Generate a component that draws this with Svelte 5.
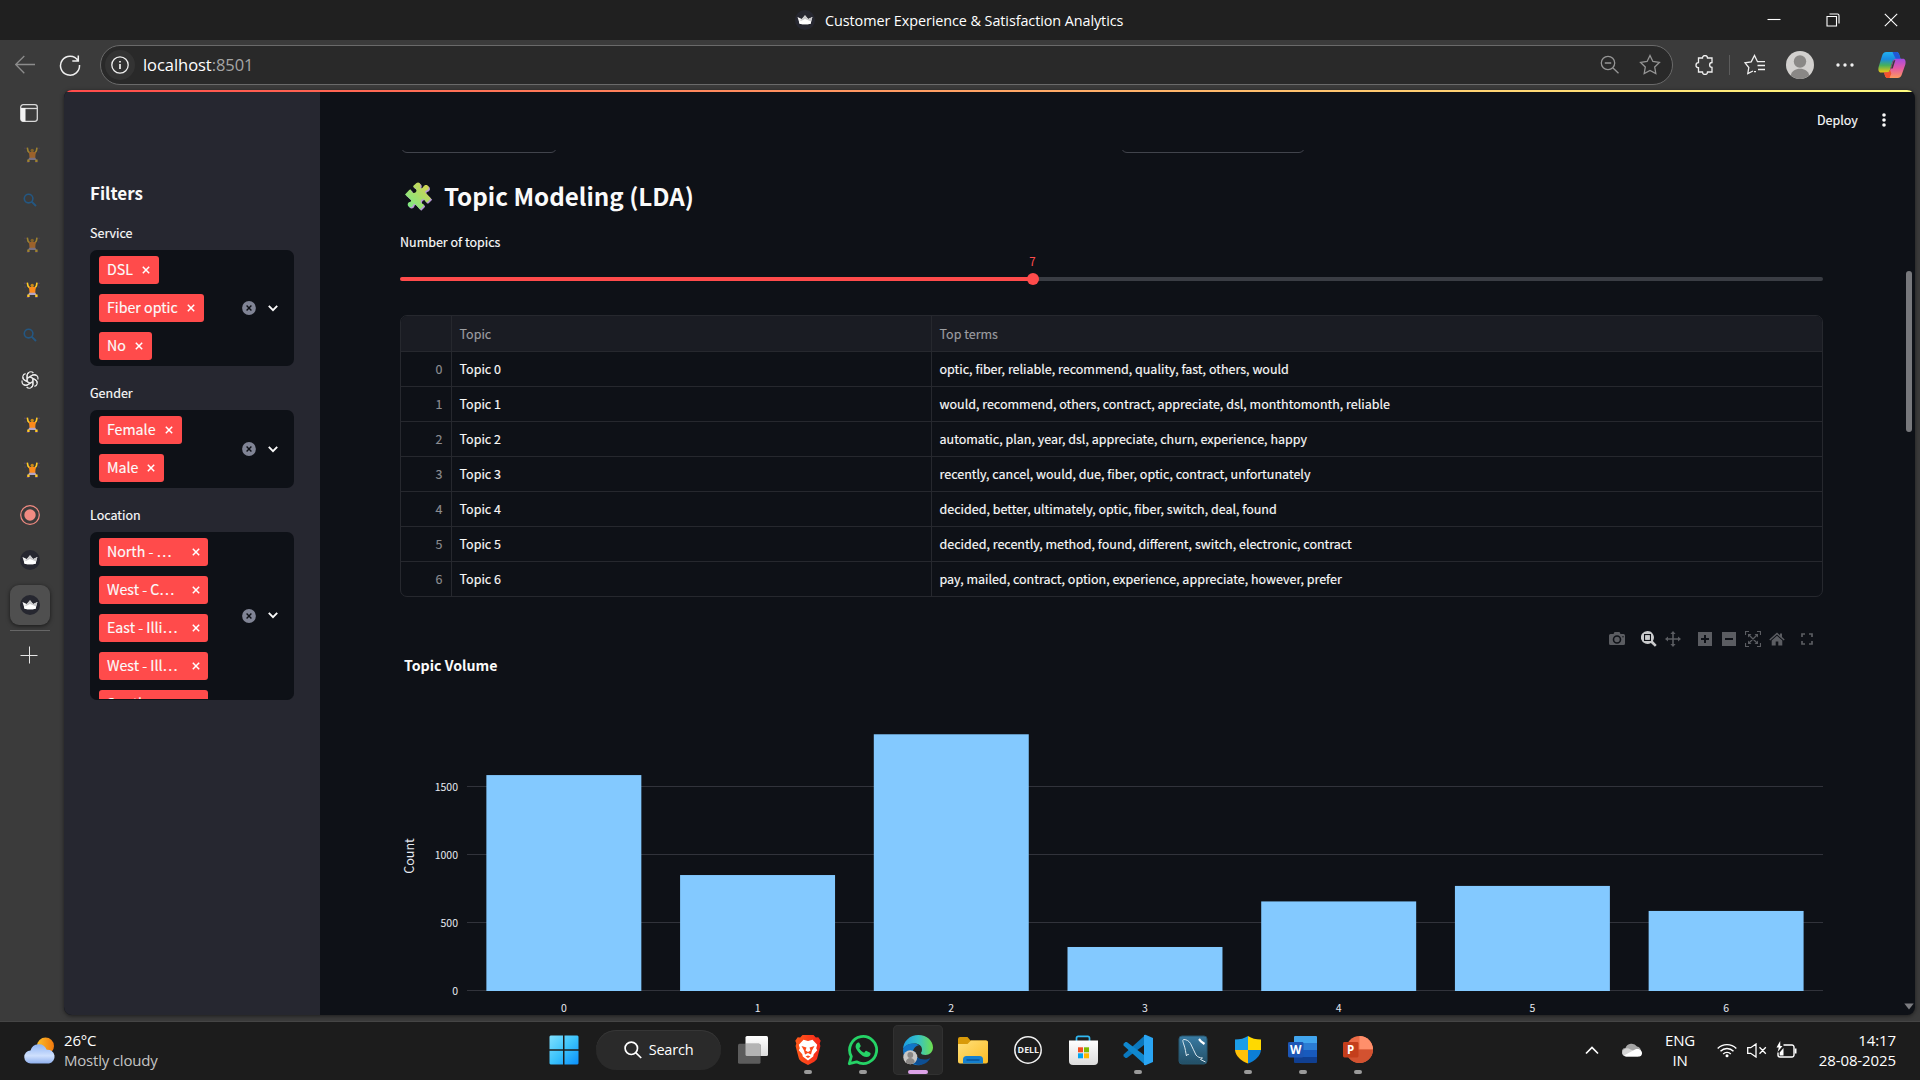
<script>
  const rail = ['lift dim', 'search', 'lift dim', 'lift', 'search', 'gpt', 'lift', 'lift', 'record', 'crown', 'crown active'];

  const filters = [
    { label: 'Service', cls: 'service', tags: ['DSL', 'Fiber optic', 'No'] },
    { label: 'Gender', cls: 'gender', tags: ['Female', 'Male'] },
    { label: 'Location', cls: 'location', tags: ['North - …', 'West - C…', 'East - Illi…', 'West - Ill…', 'South - …'] }
  ];

  const topics = [
    'optic, fiber, reliable, recommend, quality, fast, others, would',
    'would, recommend, others, contract, appreciate, dsl, monthtomonth, reliable',
    'automatic, plan, year, dsl, appreciate, churn, experience, happy',
    'recently, cancel, would, due, fiber, optic, contract, unfortunately',
    'decided, better, ultimately, optic, fiber, switch, deal, found',
    'decided, recently, method, found, different, switch, electronic, contract',
    'pay, mailed, contract, option, experience, appreciate, however, prefer'
  ];

  // Chart geometry in svg units
  const base = 990.5;
  const perUnit = 136 / 1000;
  const pitch = 193.71;
  const counts = [1584, 849, 1884, 320, 655, 769, 585];
  const ticks = [0, 500, 1000, 1500];
  const yOf = (v) => base - v * perUnit;

  const apps = ['taskview', 'brave', 'whatsapp', 'edge', 'explorer', 'dell', 'store', 'vscode', 'mysql', 'shield', 'word', 'ppt'];
  const running = ['brave', 'whatsapp', 'edge', 'vscode', 'shield', 'word', 'ppt'];
</script>

{#snippet crown()}
  <svg width="20" height="20" viewBox="0 0 20 20">
    <circle cx="10" cy="10" r="10" fill="#262730" />
    <path d="M2.5 7 L6.8 9 L10 5.3 L13.2 9 L17.4 7 L15.6 13.8 Q10 14.8 4.6 13.8Z" fill="#f4f4f4" />
    <path d="M10 5.3 L13.2 9 L17.4 7 L15.6 13 L5 10.5 L6.8 9Z" fill="#c9c9cb" />
    <path d="M4 12 L10 9 L16.2 11.5 L15.6 13.8 Q10 14.8 4.6 13.8Z" fill="#fff" />
  </svg>
{/snippet}

{#snippet railIcon(kind)}
  {#if kind.startsWith('lift')}
    <svg class="lift" class:dim={kind.includes('dim')} width="16" height="16" viewBox="0 0 16 16">
      <path d="M.2 1.2h1.4M14.4 1.2h1.4M.6 5h1M14.4 5h1M2.6 15.6h2.6M11.2 15.6h2.4" stroke="#5d4380" stroke-width="1" />
      <path d="M3.3.6 L4 4 L6 6.2 M13 .6 L12.4 4 L10.600 6.2" stroke="#ffc928" stroke-width="1.6" fill="none" />
      <circle cx="8.2" cy="3.500" r="1.7" fill="#c98a18" />
      <path d="M4.9 5h6.800l-.5 6.2H5.600z" fill="#fb8a1c" />
      <path d="M5.2 10.8h6.200l1.200 2.200H4z" fill="#b4a5c8" />
      <path d="M3.2 13.8h2.400M11.200 13.800h2.400" stroke="#ffc928" stroke-width="2.400" />
    </svg>
  {:else if kind === 'search'}
    <svg width="14" height="14" viewBox="0 0 14 14" fill="none" stroke="#245782" stroke-width="1.6">
      <circle cx="5.6" cy="5.6" r="4.300" /><path d="M8.6 8.6 L13 13" stroke-width="1.9" />
    </svg>
  {:else if kind === 'gpt'}
    <svg width="18" height="18" viewBox="-9 -9 18 18" fill="none" stroke="#e9e9e9" stroke-width="1.200">
      {#each [0, 60, 120, 180, 240, 300] as a}
        <path transform="rotate({a})" d="M-2.9 1.600 L-2.9 -4.800 A3.600 3.600 0 0 1 3.400 -7 M-2.9 -1.600 L2.700 -4.900 A3.500 3.500 0 0 1 6 -4.600" />
      {/each}
    </svg>
  {:else if kind === 'record'}
    <svg width="20" height="20" viewBox="0 0 20 20">
      <circle cx="10" cy="10" r="9.3" fill="none" stroke="#f28b82" stroke-width="1.2" />
      <circle cx="10" cy="10" r="5.7" fill="#f28b82" />
    </svg>
  {:else}
    {@render crown()}
  {/if}
{/snippet}

{#snippet appIcon(name)}
  <svg width="32" height="32" viewBox="0 0 32 32">
    {#if name === 'taskview'}
      <rect x="8.5" y="2" width="22.5" height="20" rx="1.5" fill="url(#tvw)" />
      <rect x="1" y="9.8" width="22.5" height="20" rx="1.5" fill="#5c5c5c" />
      <path d="M8.5 9.8H22a1.5 1.5 0 0 1 1.5 1.5V22H10a1.5 1.5 0 0 1-1.5-1.5z" fill="#b4b4b4" />
    {:else if name === 'brave'}
      <path d="M10.5 1h11l2.3 2.6 2.5-.4 2.4 3.6-1 2.6.7 2.6-3.2 12.2c-.5 1.6-2 2.8-3.4 3.8L16 31l-5.800-3c-1.500-1-2.900-2.200-3.400-3.800L3.600 12l.7-2.600-1-2.600 2.400-3.600 2.500.4z" fill="url(#brv)" />
      <path d="M16 7l4.500-1.300 4.700 5-1 3.500 1 2-3.500 4-.5 2.400L16 26.500l-5.200-3.900-.5-2.400-3.500-4 1-2-1-3.500 4.700-5z" fill="#fff" />
      <path d="M9.500 12l5 1.500-1 3 2.500 1.500 2.500-1.500-1-3 5-1.500-2.500 4.500-1 4L16 19l-3 1.500-1-4zM13.500 22.500L16 24l2.500-1.500-2.500-1z" fill="#fb4a1c" />
    {:else if name === 'whatsapp'}
      <path d="M2.300 29.700l2-7.200A13.500 13.500 0 1 1 9.600 27.800z" fill="none" stroke="#25d366" stroke-width="2.800" stroke-linejoin="round" />
      <path d="M11.300 8.600c-.8 0-2.700 1.300-2.700 3.800 0 3.300 6.300 10.600 11 10.600 2.400 0 4-1.600 4-3.300 0-.8-.3-1-1-1.300l-3-1.500c-.6-.3-.9-.1-1.300.4l-1.100 1.400c-2-.7-4-2.600-4.900-4.500l1.100-1.400c.3-.4.4-.7.2-1.200l-1.200-2.600c-.2-.4-.5-.4-1.100-.4z" fill="#25d366" />
    {:else if name === 'edge'}
      <path d="M1 16C1 7 8 1 16.500 1 25 1 31 7 31 13.500c0 4.500-3.500 7.500-7.500 7.500-3 0-4.500-1-4.500-2 0-.8 1-1 1-3.500C20 12 17 9.500 12.500 9.500 6 9.500 1 13 1 16z" fill="url(#edg)" />
      <path d="M1 16c.5-4 5-6.500 10.500-6.500 2 0 4 .6 5.500 1.700-3 .3-6.500 3.800-6.500 8.300 0 6 5 10.500 10 11.300C10 33 1 26 1 16z" fill="#1176c8" />
      <path d="M13 17c0 5 4 8.500 9.500 8.500 2.500 0 4.500-.6 6-1.500-2.500 4.500-7 7-11.500 7-6 0-8-6-7-10 .5-2 1.500-3.500 3-4z" fill="#0d4f94" />
      <circle cx="8.300" cy="23.300" r="7" fill="#c9c7c5" />
      <circle cx="8.300" cy="21" r="2.900" fill="#8b8886" /><path d="M3.800 28.500c0-6 9-6 9 0-2.500 2.300-6.500 2.300-9 0z" fill="#8b8886" />
    {:else if name === 'explorer'}
      <path d="M1 5a2 2 0 0 1 2-2h7.500l3 3.500H29a2 2 0 0 1 2 2V12H1z" fill="#d99a09" />
      <path d="M1 10h9.500L14 6.500h15a2 2 0 0 1 2 2V27.500a2 2 0 0 1-2 2H3a2 2 0 0 1-2-2z" fill="url(#fld)" />
      <path d="M6 29.500V25.500a3.500 3.500 0 0 1 3.500-3.500h13a3.500 3.500 0 0 1 3.500 3.500v4z" fill="#1580cf" /><path d="M9.500 26h13" stroke="#064f94" stroke-width="1.400" />
    {:else if name === 'dell'}
      <circle cx="16" cy="16" r="13.200" fill="none" stroke="#f0f0f0" stroke-width="1.500" />
      <text x="5.600" y="19.400" font-size="9.500" font-weight="700" fill="#f0f0f0" textLength="21.500" lengthAdjust="spacingAndGlyphs">DELL</text>
    {:else if name === 'store'}
      <path d="M9.500 7V4a1.700 1.700 0 0 1 1.700-1.700h9.600A1.700 1.700 0 0 1 22.500 4v3" fill="none" stroke="#31b9f2" stroke-width="1.700" />
      <path d="M2 6.500h29V27a4 4 0 0 1-4 4H6a4 4 0 0 1-4-4z" fill="url(#tvw)" />
      <path d="M11 13.300h5v5h-5z" fill="#f25022" /><path d="M17 13.300h5v5h-5z" fill="#7fba00" /><path d="M11 19.300h5v5h-5z" fill="#00a4ef" /><path d="M17 19.300h5v5h-5z" fill="#ffb900" />
    {:else if name === 'vscode'}
      <path d="M23 1.200L1.500 20.500v1.800l2 1.700h1.300L24 9.500z" fill="#0b78bd" />
      <path d="M23 30.800L1.500 11.500V9.700L3.500 8h1.300L24 22.500z" fill="#1088cf" />
      <path d="M22 1l1.500-.3L31 4v24l-7.500 3.300L22 31z" fill="#2aa5f3" />
    {:else if name === 'mysql'}
      <rect x="2" y="2" width="28" height="28" rx="3" fill="url(#sql)" stroke="#27566f" />
      <path d="M12 21c-1-1.500-2-.5-2.500 1C8.500 18 8.500 15 7 11 6 8 5 5.500 7 5.500c2.500 0 5 1.500 6.500 4 2 3.500 3.500 8 5.500 11.500 1.500 2 4 3 6.500 3l-2 1.500 5 2.500" fill="none" stroke="#dbe8ef" stroke-width="1" />
      <path d="M22 5l2 2.500 3.500 2.500" stroke="#fff" stroke-width="2.200" />
    {:else if name === 'shield'}
      <path d="M16 2C12.500 4.500 8 5.500 3 5.500V16h13z" fill="#1b9de8" /><path d="M16 2c3.500 2.500 8 3.500 13 3.500V16H16z" fill="#ffd900" />
      <path d="M3 16h13v13.500C9 27 3.500 22 3 16z" fill="#ffc108" /><path d="M29 16H16v13.500C23 27 28.500 22 29 16z" fill="#0c7fd6" />
    {:else if name === 'word'}
      <path d="M8 2h21a1 1 0 0 1 1 1v6H7V3a1 1 0 0 1 1-1z" fill="#41a5ee" /><path d="M7 9h23v7H7z" fill="#2b7cd3" /><path d="M7 16h23v7H7z" fill="#185abd" /><path d="M7 23h23v5a1 1 0 0 1-1 1H8a1 1 0 0 1-1-1z" fill="#103f91" />
      <rect x="1" y="8" width="15.500" height="15.500" rx="1.400" fill="#1d56b5" />
      <text x="3" y="19.800" font-size="11.500" font-weight="700" fill="#fff" textLength="11.500" lengthAdjust="spacingAndGlyphs">W</text>
    {:else}
      <circle cx="17.500" cy="15.500" r="13.500" fill="#ed6c47" /><path d="M17.500 2A13.500 13.500 0 0 1 31 15.500H17.500z" fill="#ff8f6b" /><path d="M4 15.500h27a13.500 13.500 0 0 1-27 0z" fill="#d35230" />
      <rect x="1" y="8" width="15.500" height="15.500" rx="1.400" fill="#c43e1c" />
      <text x="5" y="19.800" font-size="11.500" font-weight="700" fill="#fff">P</text>
    {/if}
  </svg>
{/snippet}

<svg class="defs" width="0" height="0">
  <defs>
    <linearGradient id="tvw" x1="0" y1="0" x2="0" y2="1"><stop offset="0" stop-color="#fff" /><stop offset="1" stop-color="#dcdcdc" /></linearGradient>
    <linearGradient id="brv" x1="0" x2="1"><stop offset="0" stop-color="#ff5a1a" /><stop offset="1" stop-color="#f5261a" /></linearGradient>
    <linearGradient id="edg" x1="0" x2="1"><stop offset="0" stop-color="#1b9de2" /><stop offset=".5" stop-color="#35c1c8" /><stop offset="1" stop-color="#6fe04d" /></linearGradient>
    <linearGradient id="fld" x1="0" y1="0" x2="1" y2="1"><stop offset="0" stop-color="#ffe07a" /><stop offset="1" stop-color="#fbbc25" /></linearGradient>
    <linearGradient id="sql" x1="0" y1="0" x2="0" y2="1"><stop offset="0" stop-color="#397ba3" /><stop offset="1" stop-color="#234f66" /></linearGradient>
    <linearGradient id="win" x1="0" y1="0" x2="1" y2="1"><stop offset="0" stop-color="#80e0ff" /><stop offset=".5" stop-color="#3cc3fb" /><stop offset="1" stop-color="#0a8ffb" /></linearGradient>
    <linearGradient id="puz" x1="0" y1="1" x2="1" y2="0"><stop offset="0" stop-color="#6fec8c" /><stop offset="1" stop-color="#dfd04a" /></linearGradient>
    <linearGradient id="cp1" x1="0" y1="0" x2="0" y2="1"><stop offset="0" stop-color="#20b0f0" /><stop offset=".35" stop-color="#1a8be0" /><stop offset=".65" stop-color="#46b05c" /><stop offset="1" stop-color="#f2c811" /></linearGradient>
    <linearGradient id="cp2" x1="0" y1="0" x2="0" y2="1"><stop offset="0" stop-color="#a34be0" /><stop offset=".5" stop-color="#e45aa5" /><stop offset="1" stop-color="#ff9a5c" /></linearGradient>
    <linearGradient id="sun" x1="0" x2="1"><stop offset="0" stop-color="#fbc02d" /><stop offset="1" stop-color="#f2780c" /></linearGradient>
    <linearGradient id="cld" x1="0" y1="0" x2="0" y2="1"><stop offset="0" stop-color="#8fb4f4" /><stop offset=".6" stop-color="#cfe0fd" /><stop offset="1" stop-color="#8fb0ee" /></linearGradient>
  </defs>
</svg>

<div class="screen">
  <header class="titlebar">
    <div class="caption">{@render crown()}<span>Customer Experience &amp; Satisfaction Analytics</span></div>
    <div class="winbtns">
      <svg width="14" height="14" viewBox="0 0 14 14"><path d="M.5 6.500h13" /></svg>
      <svg width="14" height="14" viewBox="0 0 14 14"><path d="M1 3.500h9.500V13H1zM3.500 1h8a1.500 1.500 0 0 1 1.500 1.500v8" /></svg>
      <svg width="14" height="14" viewBox="0 0 14 14"><path d="M.8.800l12.400 12.400M13.200.800L.8 13.200" /></svg>
    </div>
  </header>

  <div class="toolbar">
    <svg class="back" width="20" height="20" viewBox="0 0 20 20"><path d="M20 9.500H.7M9.300 1L.7 9.500l8.600 8.700" /></svg>
    <svg class="reload" width="22" height="22" viewBox="0 0 22 22"><path d="M19 6.500A9.500 9.500 0 1 0 20.500 11M19.300 1.500v5.600h-6" /></svg>
    <div class="address">
      <span class="info"><svg width="18" height="18" viewBox="0 0 18 18"><circle cx="9" cy="9" r="8.200" /><path d="M9 8v5M9 5v1.600" stroke-width="1.700" /></svg></span>
      <span class="url">localhost<i>:8501</i></span>
      <svg class="gray" width="20" height="20" viewBox="0 0 20 20"><circle cx="8" cy="8" r="6.700" /><path d="M13 13l5.500 5.300M4.800 8h6.400" /></svg>
      <svg class="gray star" width="22" height="22" viewBox="0 0 22 22"><path d="M11 1.500l2.900 6 6.500.9-4.700 4.600 1.100 6.500L11 16.400l-5.800 3.100 1.100-6.500L1.600 8.400l6.500-.9z" /></svg>
    </div>
    <svg class="ext" width="20" height="20" viewBox="0 0 20 20"><path d="M4 3h3.500a2.500 2.500 0 0 1 5 0H17v4.500a2.300 2.300 0 1 0 0 4.800V17h-4.500a2.500 2.500 0 0 1-5 0H3.500v-4.300a2.500 2.500 0 0 1 0-5V3z" /></svg>
    <span class="sep"></span>
    <svg class="fav" width="22" height="22" viewBox="0 0 22 22"><path d="M9 17l-5.200 2.500 1-6L1 8.800l6.200-1L10.500 1.500l3 6.200H21M13.500 11.500H21M14 15.500h7M10 17.600h2" /></svg>
    <svg class="avatar" width="28" height="28" viewBox="0 0 28 28"><circle cx="14" cy="14" r="14" fill="#d2d0ce" stroke="none" /><circle cx="14" cy="10.500" r="6.200" fill="#8a8886" stroke="none" /><path d="M4.800 24.500c1-9 17.400-9 18.400 0A14 14 0 0 1 4.800 24.500z" fill="#8a8886" stroke="none" /></svg>
    <svg class="more" width="18" height="6" viewBox="0 0 18 6"><path d="M2 3h.01M9 3h.01M16 3h.01" stroke-width="3.400" stroke-linecap="round" /></svg>
    <svg class="copilot" width="28" height="28" viewBox="0 0 28 28">
      <path class="blue" d="M8.500 1h10c2 0 2.600 2 3.300 4.600l.8 2.600H18c-2 0-3 .8-3.600 2.800l-2.500 8c-.6 1.800-1.500 2.500-3.400 2.500H3C.6 21.500 0 19 .6 16L4 5c.8-2.500 2-4 4.500-4z" />
      <path class="navy" d="M14.500 1h4c2 0 2.800 2 3.500 5l.6 2.200H18L15.600 3.500z" />
      <path class="pink" d="M19.500 27h-10c-2 0-2.500-2-3-4.200l-.4-1.300h2.500c2 0 2.900-.7 3.500-2.500l2.700-8.500c.6-1.800 1.500-2.800 3.400-2.800H25c2.400 0 3 2.500 2.400 5.500L24 23c-.8 2.500-2 4-4.500 4z" />
      <path class="ember" d="M6.100 21.500h2.500c2 0 2.900-.7 3.500-2.500l1.200 3.500L11.500 27h-2c-2 0-2.800-2.700-3.400-5.500z" />
      <path class="gap" d="M13 17.500l2.600-8 1.800-.5-2.700 8.500z" />
    </svg>
  </div>

  <div class="workspace">
    <nav class="rail">
      <div class="cell first"><svg width="18" height="18" viewBox="0 0 18 18"><rect x=".7" y=".7" width="16.600" height="16.600" rx="2.500" fill="none" stroke="#d8d8d8" stroke-width="1.300" /><path d="M.7 4.500h16.600" stroke="#d8d8d8" stroke-width="1.300" /><path d="M1 4h4.500v13.500H3a2 2 0 0 1-2-2z" fill="#f2f2f2" /></svg></div>
      {#each rail as kind}
        <div class="cell" class:active={kind.includes('active')}><span>{@render railIcon(kind)}</span></div>
      {/each}
      <hr />
      <svg class="plus" width="18" height="18" viewBox="0 0 18 18"><path d="M9.500 .5v17M.5 9.500h17" stroke="#e6e6e6" stroke-width="1" /></svg>
    </nav>

    <div class="page">
      <div class="rainbow"></div>
      <aside>
        <h3>Filters</h3>
        {#each filters as f}
          <label class={f.cls}>{f.label}</label>
          <div class="select {f.cls}">
            <div class="tags">
              {#each f.tags as t}
                <span class="tag"><b>{t}</b><svg width="8" height="8" viewBox="0 0 8 8"><path d="M.8.800l6.400 6.400M7.200.800L.8 7.200" stroke="#fff" stroke-width="1.500" /></svg></span>
              {/each}
            </div>
            <svg width="14" height="14" viewBox="0 0 14 14"><circle cx="7" cy="7" r="6.900" fill="#808495" /><path d="M4.600 4.600l4.800 4.800M9.400 4.600L4.600 9.400" stroke="#0e1117" stroke-width="1.400" /></svg>
            <svg class="chev" width="10" height="7" viewBox="0 0 10 7"><path d="M.8.900L5 5.200 9.200.900" fill="none" stroke="#fafafa" stroke-width="1.900" /></svg>
          </div>
        {/each}
      </aside>

      <main>
        <div class="apphead"><span>Deploy</span><svg width="4" height="14" viewBox="0 0 4 14"><circle cx="2" cy="2" r="1.800" /><circle cx="2" cy="7" r="1.800" /><circle cx="2" cy="12" r="1.800" /></svg></div>
        <div class="clipped"><i class="c1"></i><i class="c2"></i></div>
        <h2>
          <svg width="30" height="30" viewBox="0 0 30 30">
            <path transform="translate(1.200 1.200)" d="M12.500 1c2-1.500 4.500.5 4 2.500-.3 1.200-.6 1.800 0 2.500.8.900 2.300-.2 3-1.500 1-2 4-2 5 0 .8 2-.3 3.500-2 4-1.500.5-1.700 1.500-.8 2.500l5.300 5.500-3.500 3.500c-1 .8-2 .3-2.300-1-.5-2-3-2.500-4-1-1.200 1.600-.3 3.400 1.300 3.800 1.500.5 1.700 1.400.8 2.400L16 27.500l-4.500-5c-1-1-2-.7-2.400.8-.6 2-3 2.700-4.600 1.200-1.500-1.600-.8-4 1.200-4.500 1.500-.5 1.700-1.500.8-2.500L1 12.500l4-4.300c1-1 2-.7 2.400.8.600 2 3 2.500 4.300 1.200 1.400-1.500.6-3.600-1-4.200-1.600-.4-1.900-1.500-1-2.500z" fill="#b99ad6" />
            <path d="M12.500 1c2-1.500 4.500.5 4 2.500-.3 1.200-.6 1.800 0 2.500.8.900 2.300-.2 3-1.500 1-2 4-2 5 0 .8 2-.3 3.500-2 4-1.500.5-1.700 1.500-.8 2.500l5.300 5.500-3.500 3.500c-1 .8-2 .3-2.300-1-.5-2-3-2.500-4-1-1.200 1.600-.3 3.400 1.300 3.800 1.500.5 1.700 1.400.8 2.400L16 27.500l-4.500-5c-1-1-2-.7-2.400.8-.6 2-3 2.700-4.600 1.200-1.500-1.600-.8-4 1.200-4.500 1.500-.5 1.700-1.500.8-2.500L1 12.500l4-4.300c1-1 2-.7 2.400.8.600 2 3 2.500 4.300 1.200 1.400-1.500.6-3.600-1-4.200-1.600-.4-1.900-1.500-1-2.500z" fill="url(#puz)" />
          </svg>
          <span>Topic Modeling (LDA)</span>
        </h2>
        <p class="slabel">Number of topics</p>
        <div class="slider"><div class="track"></div><div class="thumb"><em>7</em></div></div>

        <div class="table">
          <div class="row head"><span></span><span>Topic</span><span>Top terms</span></div>
          {#each topics as terms, i}
            <div class="row"><span>{i}</span><span>Topic {i}</span><span>{terms}</span></div>
          {/each}
        </div>

        <div class="modebar">
          <svg class="m1" width="16" height="16" viewBox="0 0 16 16"><path fill-rule="evenodd" d="M5.500 1h5l1 2H14.500A1.500 1.500 0 0 1 16 4.500v8a1.500 1.500 0 0 1-1.500 1.500h-13A1.500 1.500 0 0 1 0 12.500v-8A1.500 1.500 0 0 1 1.500 3h3zM8 4.200a4.300 4.300 0 1 0 0 8.600 4.300 4.300 0 0 0 0-8.600zm0 1.600a2.700 2.700 0 1 1 0 5.400 2.700 2.700 0 0 1 0-5.400zM14 5a.7.700 0 1 0 0 1.400A.7.700 0 0 0 14 5z" /></svg>
          <svg class="m2" width="16" height="16" viewBox="0 0 16 16"><path fill-rule="evenodd" d="M6.500 0a6.500 6.500 0 1 0 3.400 12l4 3.700 1.800-1.700-3.800-4A6.500 6.500 0 0 0 6.500 0zM3 3h7v7H3zm1.200 1.200v4.600h4.600V4.200z" /><path d="M4.300 4.300h4.400v4.400H4.300z" /></svg>
          <svg class="m3" width="16" height="16" viewBox="0 0 16 16"><path d="M8 0l2.600 3H8.800v4.200H13V5.400L16 8l-3 2.600V8.800H8.800V13h1.800L8 16l-2.600-3h1.800V8.800H3v1.800L0 8l3-2.600v1.800h4.200V3H5.400z" /></svg>
          <svg class="m4" width="14" height="14" viewBox="0 0 14 14"><path fill-rule="evenodd" d="M0 0h14v14H0zM6 3v3H3v2h3v3h2V8h3V6H8V3z" /></svg>
          <svg class="m5" width="14" height="14" viewBox="0 0 14 14"><path fill-rule="evenodd" d="M0 0h14v14H0zM3 6v2h8V6z" /></svg>
          <svg class="m6" width="16" height="16" viewBox="0 0 16 16"><path d="M.5 4V.5H4M12 .5h3.500V4M15.500 12v3.500H12M4 15.500H.5V12M4 4l8 8M12 4l-8 8" fill="none" stroke="#5b5d62" stroke-width="1.200" /><path d="M3 3h3.500L3 6.500zM13 3v3.500L9.500 3zM13 13H9.500L13 9.500zM3 13V9.500L6.500 13z" /></svg>
          <svg class="m7" width="16" height="14" viewBox="0 0 16 14"><path d="M8 .5l3 2.700V1.500h2V5l2.700 2.500-.9 1L8 2.500 1.200 8.500l-.9-1z" /><path d="M8 3.800l5.300 4.700v5h-4V9.500H6.700v4h-4v-5z" /></svg>
          <svg class="m8" width="12" height="12" viewBox="0 0 12 12"><path d="M1 4V1h3M8 1h3v3M11 8v3H8M4 11H1V8" fill="none" stroke="#5b5d62" stroke-width="1.700" /></svg>
        </div>
        <h4>Topic Volume</h4>
        <svg class="chart" width="1423" height="334" viewBox="400 681 1423 334">
          {#each ticks as t}
            <path d="M467 {yOf(t)}H1823" stroke="#31333b" />
            <text class="tick" x="458" y={yOf(t) + 4} text-anchor="end">{t}</text>
          {/each}
          {#each counts as c, i}
            <rect x={467 + pitch * (i + 0.1)} y={yOf(c)} width={pitch * 0.8} height={base + 0.5 - yOf(c)} fill="#83c9ff" />
            <text class="tick" x={467 + pitch * (i + 0.5)} y="1011.500" text-anchor="middle">{i}</text>
          {/each}
          <text class="axis" transform="translate(414 856) rotate(-90)" text-anchor="middle">Count</text>
        </svg>
      </main>

      <div class="scroll"><div class="bar"></div><svg width="10" height="7" viewBox="0 0 10 7"><path d="M.3.500h9.400L5 6.500z" fill="#7c7d81" /></svg></div>
    </div>
  </div>

  <footer>
    <div class="weather">
      <svg width="32" height="30" viewBox="0 0 32 30">
        <circle cx="21.500" cy="10" r="8.500" fill="url(#sun)" />
        <path d="M7 27.500a6.500 6.500 0 0 1-.5-13 8.500 8.500 0 0 1 16.200-.8 7 7 0 0 1 2.300 13.800z" fill="url(#cld)" />
      </svg>
      <div><span>26°C</span><span class="sub">Mostly cloudy</span></div>
    </div>
    <div class="dock">
      <svg class="start" width="30" height="30" viewBox="0 0 30 30"><path d="M1.500.5H14v13.700H.5V1.500zM15.500.5h13l1 1v12.700h-14zM.5 15.700H14v13.800H1.500l-1-1zM15.500 15.700h14v12.800l-1 1h-13z" fill="url(#win)" /></svg>
      <div class="find"><svg width="18" height="18" viewBox="0 0 18 18"><circle cx="7.300" cy="7.300" r="6.200" /><path d="M11.700 11.700l5.500 5.300" /></svg>Search</div>
      {#each apps as a}
        <div class="app" class:focus={a === 'edge'}>{@render appIcon(a)}{#if running.includes(a)}<i></i>{/if}</div>
      {/each}
    </div>
    <div class="tray">
      <svg class="up" width="14" height="9" viewBox="0 0 14 9"><path d="M1 7.500l6-6 6 6" fill="none" stroke="#fff" stroke-width="1.700" /></svg>
      <svg class="cloud" width="20" height="14" viewBox="0 0 20 14"><path d="M4 13a4 4 0 0 1-.5-8A6.500 6.500 0 0 1 15 3.500 5 5 0 0 1 16 13z" fill="#a5a5a5" /><path d="M4 13.500a4 4 0 0 1-1.500-7.500c2-1 4-.8 6 .5l4 1.500 4-2a4 4 0 0 1-.5 7.500z" fill="#d5d5d5" /><path d="M2 12.500L13 6.500c3-1.500 7 .5 7 3.500s-2 3.500-4 3.500H4z" fill="#fff" /></svg>
      <div class="lang"><span>ENG</span><span>IN</span></div>
      <svg class="wifi" width="20" height="15" viewBox="0 0 20 15" fill="none" stroke="#fff" stroke-width="1.400"><path d="M.7 5.500a13 13 0 0 1 18.600 0M3.500 8.300a9 9 0 0 1 13 0M6.200 11a5.300 5.300 0 0 1 7.600 0" /><circle cx="10" cy="12.700" r="1.500" fill="#fff" stroke="none" /></svg>
      <svg class="mute" width="20" height="15" viewBox="0 0 20 15" fill="none" stroke="#fff" stroke-width="1.300"><path d="M.7 4.700h3L9 1v13l-5.300-3.700h-3zM12.500 4.300l6.300 6.400M18.800 4.300l-6.300 6.400" /></svg>
      <svg class="batt" width="21" height="18" viewBox="0 0 21 18"><path d="M7.500 4h8.300A2 2 0 0 1 18 6v8a2 2 0 0 1-2.200 2H4a2 2 0 0 1-2-2V11.500" fill="none" stroke="#fff" stroke-width="1.400" /><path d="M18.700 7.500h1.800v5h-1.800zM3.700 11.500L7.500 7v7.500H3.700z" fill="#fff" /><path d="M4.200 0L.5 6.500h2.300L1.600 11 6.500 5H4.300z" fill="#fff" /></svg>
      <div class="clock"><span>14:17</span><span>28-08-2025</span></div>
    </div>
  </footer>
</div>

<style>
  :global(body) { margin: 0; background: #1c1c1c; }
  .screen { width: 1920px; height: 1080px; overflow: hidden; display: flex; flex-direction: column; color: #fff; font-family: "Open Sans", "Noto Sans", sans-serif; }
  .defs { position: absolute; }
  svg { display: block; flex: none; }
  i, em { font-style: normal; }

  .titlebar { height: 40px; background: #202020; display: grid; grid-template-columns: 795px 1fr 153px; align-items: center; }
  .caption { grid-column: 2; display: flex; align-items: center; gap: 10px; font-size: 14.4px; letter-spacing: -0.08px; line-height: 20px; }
  .caption span { padding-top: 1px; }
  .winbtns { width: 131px; padding-right: 21px; display: flex; justify-content: space-between; }
  .winbtns svg { fill: none; stroke: #fff; stroke-width: 1.1; }

  .toolbar { height: 50px; background: #3b3b3b; display: flex; align-items: center; box-sizing: border-box; }
  .toolbar svg { fill: none; stroke: #f0f0f0; stroke-width: 1.3; }
  .toolbar .back { margin-left: 15px; stroke: #8c8c8c; }
  .toolbar .reload { margin-left: 24px; stroke-width: 1.5; }
  .address { margin-left: 19px; width: 1573px; height: 40px; box-sizing: border-box; border: 1px solid #6a6a6a; border-radius: 20px; background: #292929; display: flex; align-items: center; padding: 0 11px 0 4px; }
  .info { width: 30px; height: 30px; border-radius: 50%; background: #333; display: grid; place-items: center; }
  .url { margin-left: 8px; flex: 1; font-size: 16.5px; letter-spacing: -0.05px; line-height: 24px; }
  .url i { color: #a5a5a5; }
  .toolbar .gray { stroke: #969696; }
  .star { margin-left: 19px; }
  .ext { margin-left: 22px; }
  .sep { width: 1px; height: 20px; background: #5c5c5c; margin-left: 14px; }
  .fav { margin-left: 14px; }
  .avatar { margin-left: 20px; }
  .more { margin-left: 22px; }
  .toolbar .copilot { margin-left: 24px; stroke: none; }
  .blue { fill: url(#cp1); }
  .navy { fill: #2257d6; }
  .pink { fill: url(#cp2); }
  .ember { fill: #f4522d; }
  .gap { fill: #3b3b3b; }

  .workspace { height: 931px; box-sizing: border-box; background: #3b3b3b; display: flex; padding: 0 5px 6px 0; }
  .rail { width: 64px; display: flex; flex-direction: column; align-items: flex-start; }
  .cell { width: 60px; height: 45px; display: grid; place-items: center; }
  .cell.first { height: 42.5px; box-sizing: border-box; padding: 3px 2px 0 0; }
  .cell.active span { width: 40px; height: 40px; border-radius: 9px; background: #4f4f4f; box-shadow: 0 1px 4px #0009; display: grid; place-items: center; }
  .lift { margin-left: 4px; }
  .dim { opacity: 0.5; }
  hr { width: 40px; height: 1px; border: 0; margin: 2px 0 0 10px; background: #666; }
  .plus { margin: 15.5px 0 0 20px; }

  .page { position: relative; flex: 1; border-radius: 8px; overflow: hidden; background: #0e1117; display: flex; font-family: "Noto Sans CJK JP", sans-serif; color: #fafafa; padding-top: 2px; box-shadow: 0 1px 4px #0008; }
  .rainbow { position: absolute; inset: 0 0 auto 0; height: 2px; background: linear-gradient(90deg, #ff4b4b, #fffd80); }
  aside { width: 256px; box-sizing: border-box; background: #262730; padding: 88px 26px 0; }
  h3 { margin: 0; font-size: 17px; line-height: 26px; font-weight: 700; }
  label { display: block; font-size: 12.500px; line-height: 18px; -webkit-text-stroke: 0.15px #fafafa; }
  label.service { margin-top: 18px; }
  label.gender, label.location { margin-top: 18px; }
  .select { margin-top: 8px; width: 204px; height: 116px; box-sizing: border-box; border-radius: 7px; background: #0e1117; display: flex; align-items: center; overflow: hidden; }
  .select.gender { margin-top: 8px; height: 78px; }
  .select.location { margin-top: 8px; height: 168px; border-bottom: 1px solid #0e1117; }
  .tags { width: 152px; height: 100%; box-sizing: border-box; padding: 6px 0 0 9px; display: flex; flex-direction: column; align-items: flex-start; gap: 10px; }
  .tag { height: 28px; flex: none; box-sizing: border-box; padding: 0 9px 0 8px; border-radius: 3px; background: #ff4b4b; display: flex; align-items: center; gap: 9px; }
  .tag b { font-weight: 400; font-size: 14.200px; line-height: 20px; white-space: nowrap; padding-bottom: 2px; -webkit-text-stroke: 0.15px #fff; }
  .location .tag { width: 109px; justify-content: space-between; padding-right: 8.500px; }
  .chev { margin-left: 12px; }

  main { width: 1585px; box-sizing: border-box; padding-left: 80px; display: flex; flex-direction: column; }
  .apphead { height: 58px; display: flex; align-items: center; padding: 0 0 3px 1417px; font-size: 12.500px; gap: 23px; box-sizing: border-box; line-height: 18px; -webkit-text-stroke: 0.15px #fafafa; }
  .apphead span { width: 42px; }
  .apphead svg { fill: #fafafa; margin-top: 1px; }
  .clipped { height: 3px; overflow: hidden; display: flex; align-items: flex-end; }
  .clipped i { height: 12px; box-sizing: border-box; border: 1px solid #41444c; border-radius: 7px; flex: none; }
  .c1 { margin-left: 1px; width: 156px; }
  .c2 { margin-left: 564px; width: 184px; }
  h2 { margin: 0; height: 72px; box-sizing: border-box; padding: 25px 0 0 4px; display: flex; gap: 10px; font-size: 24.200px; line-height: 36px; font-weight: 700; }
  h2 svg { margin-top: 4px; }
  .slabel { margin: 0; height: 34px; line-height: 34px; font-size: 12.500px; -webkit-text-stroke: 0.15px #fafafa; }
  .slider { position: relative; width: 1423px; height: 56px; box-sizing: border-box; padding-top: 18px; }
  .track { height: 4px; border-radius: 2px; background: linear-gradient(90deg, #ff4b4b 44.44%, #3a3d44 44.44%); }
  .thumb { position: absolute; left: 626.500px; top: 14px; width: 12px; height: 12px; border-radius: 50%; background: #ff4b4b; }
  .thumb em { position: absolute; left: 0; width: 12px; top: -20px; text-align: center; color: #ff4b4b; font-size: 11.500px; line-height: 16px; }
  .table { width: 1423px; height: 282px; box-sizing: border-box; border: 1px solid #26282e; border-radius: 7px; overflow: hidden; font-size: 12.500px; }
  .row { display: grid; grid-template-columns: 51px 480px 1fr; height: 35px; line-height: 34px; }
  .row span { border-right: 1px solid #26282e; border-bottom: 1px solid #26282e; padding-left: 7.500px; -webkit-text-stroke: 0.15px currentColor; }
  .row span:last-child { border-right: 0; }
  .row span:first-child { text-align: right; padding: 0 8.500px 0 0; color: #8c8d91; }
  .row.head { height: 36px; line-height: 35px; background: #1a1c23; color: #9c9da1; }
  .modebar { height: 54px; box-sizing: border-box; padding: 30px 0 0 1209px; display: flex; align-items: center; fill: #5b5d62; }
  .m2 { margin-left: 16px; fill: #c9cacc; }
  .m3 { margin-left: 8px; }
  .m4 { margin-left: 17px; }
  .m5 { margin-left: 10px; }
  .m6 { margin-left: 9px; }
  .m7 { margin-left: 8px; }
  .m8 { margin-left: 16px; }
  h4 { margin: 0 0 0 4px; height: 30px; line-height: 28px; font-size: 14.200px; font-weight: 700; }
  .tick { font-size: 10.500px; fill: #e6eaf1; }
  .axis { font-size: 12.500px; fill: #e6eaf1; }

  .scroll { width: 10px; padding-top: 179px; margin-left: -1px; display: flex; flex-direction: column; justify-content: space-between; align-items: center; padding-bottom: 5px; box-sizing: border-box; }
  .bar { width: 6px; height: 161px; border-radius: 3px; background: #77787c; }

  footer { height: 59px; background: #1c1c1c; display: grid; grid-template-columns: 549px 1fr 340px; align-items: start; font-size: 15px; line-height: 20px; letter-spacing: -0.2px; border-top: 1px solid #454545; box-sizing: border-box; }
  .weather { display: flex; padding: 8px 0 0 24px; gap: 8px; }
  .weather svg { margin-top: 6px; }
  .weather div { display: flex; flex-direction: column; }
  .sub { color: #c4c4c4; }
  .dock { display: flex; height: 56px; align-items: center; }
  .find { margin: 0 7px 0 17px; width: 125px; height: 40px; border-radius: 20px; background: #2a2a2a; box-shadow: inset 0 1px #363636; display: flex; align-items: center; justify-content: center; gap: 7px; font-size: 14.500px; }
  .find svg { fill: none; stroke: #fff; stroke-width: 1.700; }
  .app { width: 50px; height: 50px; margin-right: 5px; border-radius: 5px; position: relative; display: grid; place-items: center; font-family: "Open Sans", sans-serif; letter-spacing: 0; }
  .app.focus { background: #292929; box-shadow: inset 0 0 0 1px #313131; }
  .app i { position: absolute; left: 21px; bottom: 1px; width: 8px; height: 4px; border-radius: 2px; background: #9a9a9a; }
  .app.focus i { left: 15px; width: 20px; background: #dca2e8; }
  .tray { display: flex; height: 56px; align-items: center; padding-left: 5px; }
  .cloud { margin-left: 23px; }
  .lang { display: flex; flex-direction: column; align-items: center; width: 34px; margin-left: 21px; }
  .wifi { margin-left: 20px; }
  .mute { margin-left: 10px; }
  .batt { margin-left: 9px; }
  .clock { display: flex; flex-direction: column; text-align: right; width: 99px; letter-spacing: -0.1px; }
</style>
